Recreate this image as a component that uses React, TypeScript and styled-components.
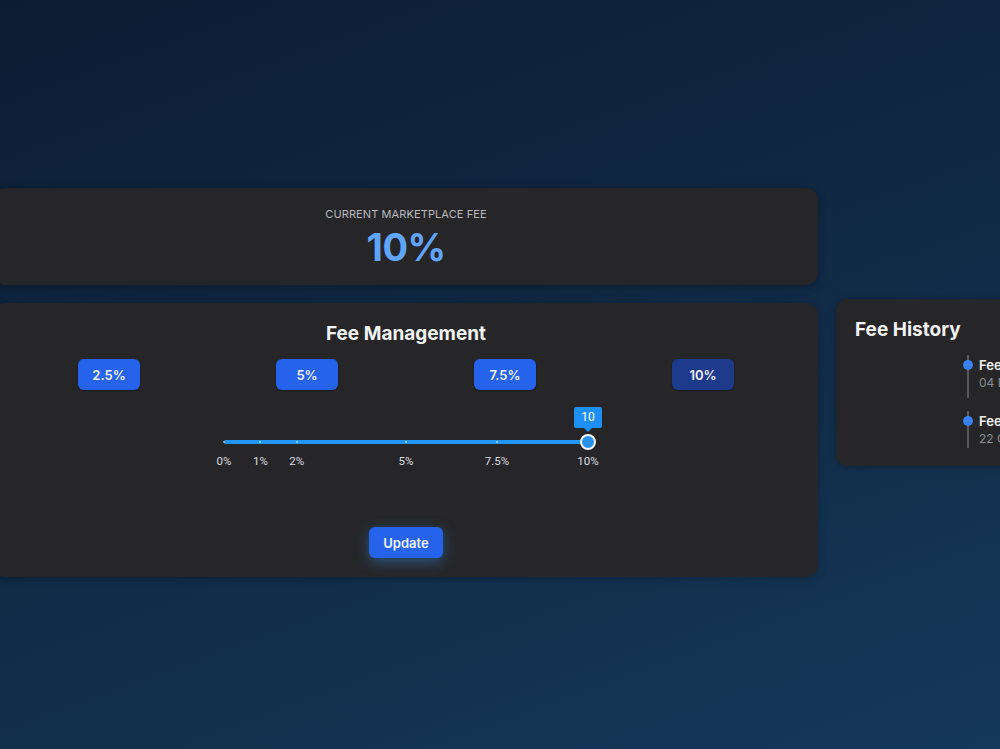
import React, { useState } from "react";
import styled, { createGlobalStyle } from "styled-components";

const GlobalStyle = createGlobalStyle`
  html, body {
    margin: 0;
    padding: 0;
    overflow: hidden;
    background: #0c1c31;
  }
  * { box-sizing: border-box; }
`;

const Page = styled.div`
  width: 100%;
  min-height: 749px;
  padding-top: 188px;
  overflow: hidden;
  background: linear-gradient(160deg, #0c1d33 0%, #102843 45%, #15395a 100%);
  font-family: Inter, "Noto Sans", sans-serif;
`;

const Row = styled.div`
  display: flex;
  align-items: flex-start;
  gap: 18px;
  margin-left: -6px;
`;

const LeftColumn = styled.div`
  width: 824px;
  flex-shrink: 0;
  display: flex;
  flex-direction: column;
  gap: 18px;
`;

const RightColumn = styled.div`
  padding-top: 111px;
  flex-shrink: 0;
`;

const Card = styled.section`
  background: #262628;
  border-radius: 12px;
  box-shadow: 0 2px 8px rgba(0, 0, 0, 0.25);
`;

const FeeCard = styled(Card)`
  padding: 19px 16px 15px;
  display: flex;
  flex-direction: column;
  align-items: center;
`;

const FeeLabel = styled.div`
  font-size: 11px;
  line-height: 14px;
  letter-spacing: 0.1px;
  color: #b9b9bd;
  text-transform: uppercase;
  margin-bottom: 3px;
`;

const FeeValue = styled.div`
  font-size: 38px;
  line-height: 46px;
  font-weight: 700;
  letter-spacing: -0.6px;
  color: #60a5fa;
`;

const ManageCard = styled(Card)`
  padding: 19px 16px 19px;
  display: flex;
  flex-direction: column;
  align-items: center;
`;

const Title = styled.h2`
  margin: 0;
  font-size: 19px;
  line-height: 23px;
  font-weight: 700;
  color: #f4f4f5;
`;

const PresetGrid = styled.div`
  width: 100%;
  margin-top: 14px;
  display: grid;
  grid-template-columns: repeat(4, 1fr);
  justify-items: center;
`;

const PresetButton = styled.button<{ $active: boolean }>`
  width: 62px;
  height: 31px;
  border: none;
  border-radius: 6px;
  background: ${(p) => (p.$active ? "#1e3a8a" : "#2563eb")};
  color: #eef2ff;
  font-family: Inter, "Noto Sans", sans-serif;
  font-size: 13px;
  font-weight: 600;
  cursor: pointer;
  box-shadow: 0 1px 2px rgba(0, 0, 0, 0.35);
`;

const SliderArea = styled.div`
  position: relative;
  width: 364px;
  height: 61px;
  margin-top: 17px;
  font-family: Roboto, "Noto Sans", sans-serif;
`;

const Track = styled.div`
  position: absolute;
  left: 0;
  right: 0;
  top: 33px;
  height: 4px;
  border-radius: 2px;
  background: #2196f3;
`;

const Mark = styled.span`
  position: absolute;
  top: 34px;
  width: 2px;
  height: 2px;
  margin-left: -1px;
  border-radius: 1px;
  background: rgba(255, 255, 255, 0.65);
`;

const MarkLabel = styled.span`
  position: absolute;
  top: 47px;
  transform: translateX(-50%);
  font-size: 11.5px;
  line-height: 15px;
  color: #dcdce0;
  white-space: nowrap;
`;

const Thumb = styled.span`
  position: absolute;
  top: 27px;
  width: 16px;
  height: 16px;
  margin-left: -8px;
  border-radius: 50%;
  background: #2b90f0;
  border: 2px solid #f5f5f5;
`;

const ValueTip = styled.span`
  position: absolute;
  top: 0;
  transform: translateX(-50%);
  min-width: 28px;
  height: 21px;
  padding: 0 6px;
  border-radius: 2px;
  background: #1e90f5;
  color: #ffffff;
  font-size: 12px;
  line-height: 21px;
  text-align: center;
  &::after {
    content: "";
    position: absolute;
    left: 50%;
    bottom: -4px;
    margin-left: -4px;
    border-left: 4px solid transparent;
    border-right: 4px solid transparent;
    border-top: 4px solid #1e90f5;
  }
`;

const UpdateButton = styled.button`
  margin-top: 59px;
  width: 74px;
  height: 31px;
  border: none;
  border-radius: 6px;
  background: #2563eb;
  color: #eef2ff;
  font-family: Inter, "Noto Sans", sans-serif;
  font-size: 13px;
  font-weight: 600;
  cursor: pointer;
  box-shadow: 0 4px 14px rgba(56, 140, 230, 0.45);
`;

const HistoryCard = styled(Card)`
  width: 264px;
  padding: 19px 19px 18px;
`;

const HistoryList = styled.ul`
  list-style: none;
  margin: 14px 0 0;
  padding: 0;
  display: flex;
  flex-direction: column;
  gap: 13px;
`;

const HistoryItem = styled.li`
  display: grid;
  grid-template-columns: 1fr 12px 1fr;
  column-gap: 5px;
  height: 43px;
  &:last-child {
    height: 37px;
  }
`;

const Separator = styled.div`
  position: relative;
  display: flex;
  justify-content: center;
  &::before {
    content: "";
    width: 2px;
    height: 100%;
    background: #5a5a5e;
  }
`;

const Dot = styled.span`
  position: absolute;
  top: 5px;
  left: 1px;
  width: 10px;
  height: 10px;
  border-radius: 50%;
  background: #3b82f6;
`;

const ItemContent = styled.div`
  min-width: 0;
  white-space: nowrap;
  padding-top: 2px;
`;

const ItemTitle = styled.div`
  font-size: 13px;
  line-height: 16px;
  font-weight: 600;
  color: #f1f1f3;
`;

const ItemDate = styled.div`
  margin-top: 2px;
  font-size: 12px;
  line-height: 16px;
  color: #8b8b90;
`;

const presets = [2.5, 5, 7.5, 10];
const marks = [0, 1, 2, 5, 7.5, 10];
const history = [
  { title: "Fee updated to 10%", date: "04 Nov 2024" },
  { title: "Fee updated to 5%", date: "22 Oct 2024" },
];

export default function App() {
  const [value, setValue] = useState(10);
  const pct = (v: number) => `${(v / 10) * 100}%`;

  return (
    <>
      <GlobalStyle />
      <Page>
        <Row>
          <LeftColumn>
            <FeeCard>
              <FeeLabel>Current Marketplace Fee</FeeLabel>
              <FeeValue>10%</FeeValue>
            </FeeCard>
            <ManageCard>
              <Title>Fee Management</Title>
              <PresetGrid>
                {presets.map((p) => (
                  <PresetButton key={p} $active={p === value} onClick={() => setValue(p)}>
                    {p}%
                  </PresetButton>
                ))}
              </PresetGrid>
              <SliderArea>
                <Track />
                {marks
                  .filter((m) => m !== value)
                  .map((m) => (
                    <Mark key={`m${m}`} style={{ left: pct(m) }} />
                  ))}
                {marks.map((m) => (
                  <MarkLabel key={`l${m}`} style={{ left: pct(m) }}>
                    {m}%
                  </MarkLabel>
                ))}
                <ValueTip style={{ left: pct(value) }}>{value}</ValueTip>
                <Thumb style={{ left: pct(value) }} />
              </SliderArea>
              <UpdateButton>Update</UpdateButton>
            </ManageCard>
          </LeftColumn>
          <RightColumn>
            <HistoryCard>
              <Title>Fee History</Title>
              <HistoryList>
                {history.map((h) => (
                  <HistoryItem key={h.date}>
                    <div />
                    <Separator>
                      <Dot />
                    </Separator>
                    <ItemContent>
                      <ItemTitle>{h.title}</ItemTitle>
                      <ItemDate>{h.date}</ItemDate>
                    </ItemContent>
                  </HistoryItem>
                ))}
              </HistoryList>
            </HistoryCard>
          </RightColumn>
        </Row>
      </Page>
    </>
  );
}
